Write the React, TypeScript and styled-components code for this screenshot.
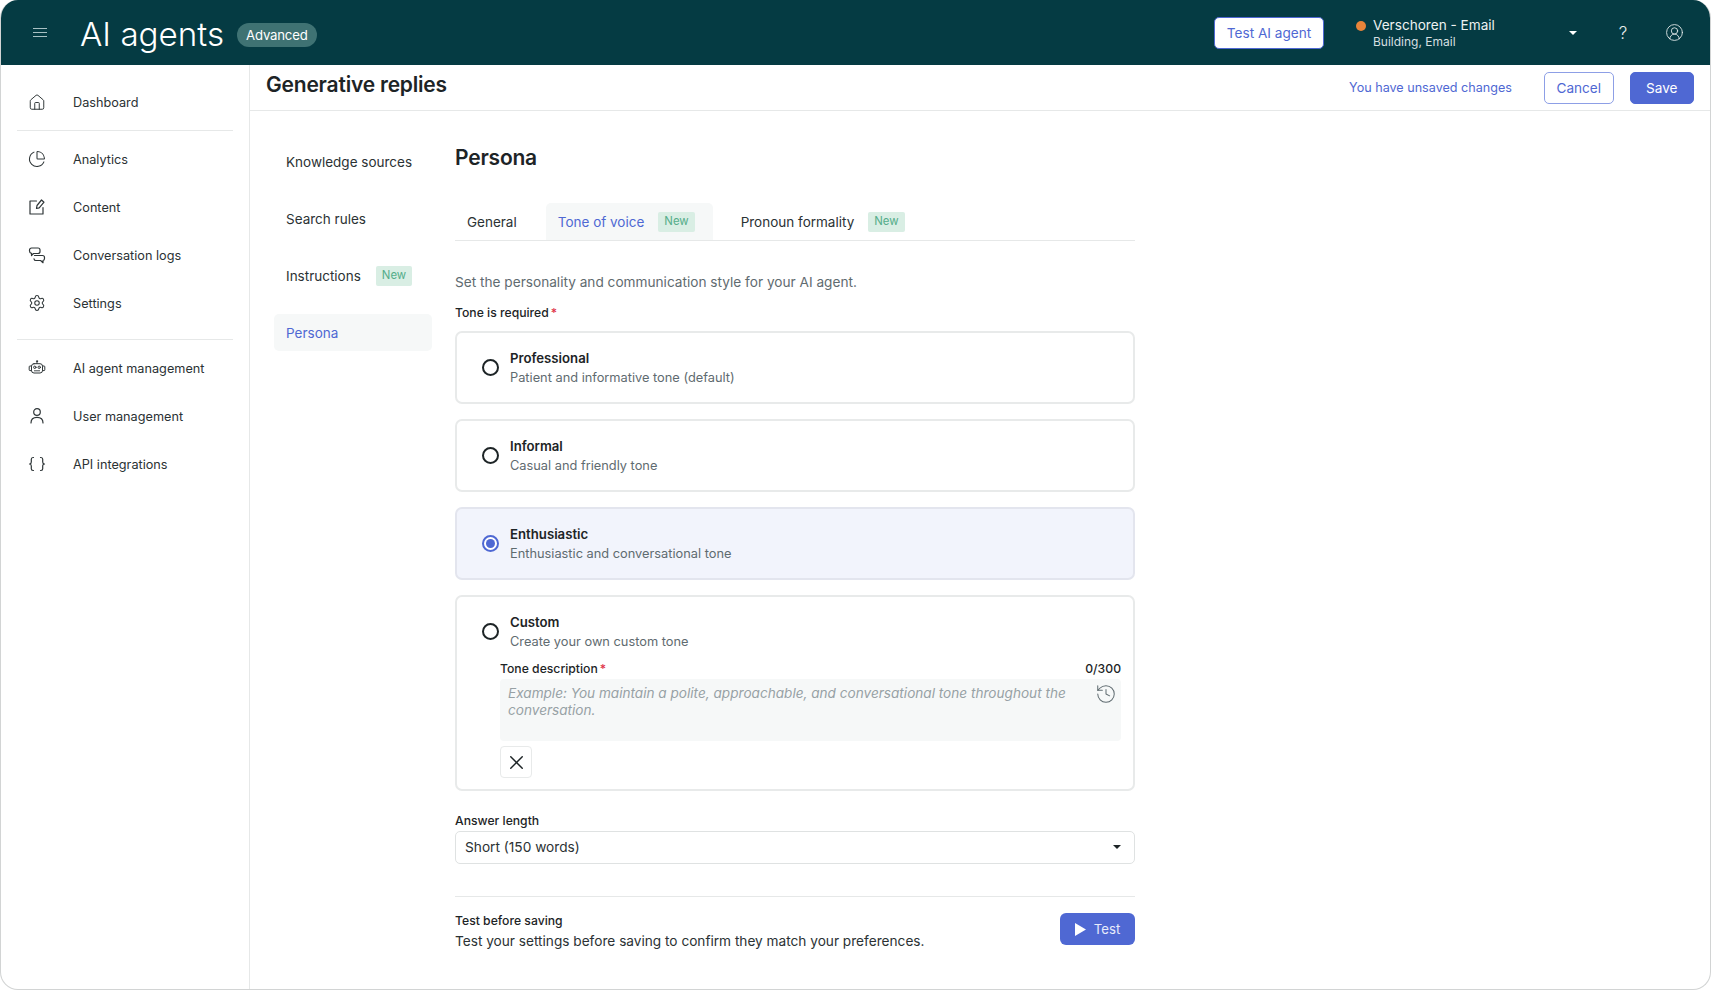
import React from "react";
import styled, { createGlobalStyle } from "styled-components";
import { House, ChartPie, Settings, History, X, CircleUserRound } from "lucide-react";

const Global = createGlobalStyle`
  html, body { margin: 0; padding: 0; background: #fff; }
  body { font-family: Inter, "Liberation Sans", sans-serif; color: #1d2426; }
  * { box-sizing: border-box; }
`;

const Frame = styled.div`
  width: 1711px;
  height: 990px;
  display: flex;
  flex-direction: column;
  border: 1px solid #d2d4d4;
  border-top: none;
  border-radius: 18px;
  overflow: hidden;
`;

// top bar
const Header = styled.header`
  height: 65px;
  flex: none;
  background: #053b43;
  display: flex;
  align-items: center;
  color: #fff;
  padding-left: 32px;
`;
const Burger = styled.div`
  width: 14px;
  display: flex;
  flex-direction: column;
  gap: 3px;
  margin-right: 33px;
  span { display: block; height: 1px; background: #a9c0c3; }
`;
const Title = styled.h1`
  margin: 0 13px 0 0;
  font-size: 33.2px;
  line-height: 42px;
  font-weight: 300;
  position: relative;
  top: 1px;
`;
const Badge = styled.span`
  height: 24px;
  padding: 0 9px;
  border-radius: 12px;
  background: #3f7273;
  font-size: 13.2px;
  line-height: 24px;
  letter-spacing: -0.2px;
  position: relative;
  top: 2px;
`;
const HeaderRight = styled.div`
  margin-left: auto;
  display: flex;
  align-items: center;
`;
const TestAgent = styled.button`
  width: 110px;
  height: 32px;
  background: #fff;
  border: 1px solid #4f68d3;
  border-radius: 5px;
  color: #4f68d3;
  font: 400 13.6px Inter, sans-serif;
  padding: 0;
  margin-right: 32px;
`;
const StatusDot = styled.span`
  width: 10px;
  height: 10px;
  border-radius: 50%;
  background: #e8843a;
  margin: -13px 7px 0 0;
`;
const Org = styled.div`
  width: 196px;
  display: flex;
  flex-direction: column;
  padding-top: 1px;
  strong { font-weight: 400; font-size: 13.6px; line-height: 17px; color: #eef2f2; }
  span { font-size: 12px; line-height: 16px; color: #d5dfe0; }
`;
const Caret = styled.span<{ $dark?: boolean }>`
  width: 0;
  height: 0;
  border-left: 4px solid transparent;
  border-right: 4px solid transparent;
  border-top: 4.5px solid ${(p) => (p.$dark ? "#1d2426" : "#fff")};
`;
const Help = styled.span`
  width: 20px;
  margin-left: 36px;
  text-align: center;
  font-size: 17px;
  font-weight: 300;
  color: #e8eeee;
`;
const Profile = styled.span`
  display: flex;
  margin: 0 26px 0 32px;
  color: #e8eeee;
`;

const Body = styled.div`
  flex: 1;
  display: flex;
  min-height: 0;
`;

// left sidebar
const Sidebar = styled.nav`
  width: 249px;
  flex: none;
  padding: 13px 16px 0;
  border-right: 1px solid #e6e8e8;
`;
const NavItem = styled.div`
  height: 48px;
  display: flex;
  align-items: center;
  padding-left: 11px;
  font-size: 12.7px;
  color: #2b3234;
`;
const NavIcon = styled.span`
  width: 18px;
  flex: none;
  display: flex;
  justify-content: center;
  margin-right: 27px;
  color: #2f3638;
`;
const NavRule = styled.div<{ $top: number }>`
  height: 1px;
  background: #e6e8e8;
  margin: ${(p) => p.$top}px 0 4px;
`;

const Main = styled.div`
  flex: 1;
  display: flex;
  flex-direction: column;
  min-width: 0;
`;
const SubHeader = styled.div`
  height: 46px;
  flex: none;
  display: flex;
  align-items: center;
  padding: 0 16px;
  border-bottom: 1px solid #e6e8e8;
`;
const PageTitle = styled.h2`
  margin: 0 auto 0 0;
  font-size: 21px;
  font-weight: 600;
  letter-spacing: -0.2px;
  position: relative;
  top: -3px;
  color: #1d2426;
`;
const Unsaved = styled.span`
  font-size: 12.6px;
  color: #4f68d3;
  margin: 0 32px 0 0;
`;
const Btn = styled.button<{ $solid?: boolean }>`
  height: 32px;
  border-radius: 5px;
  font: 400 13.6px Inter, sans-serif;
  padding: 0 ${(p) => (p.$solid ? "15.5px" : "11.5px")};
  color: ${(p) => (p.$solid ? "#fff" : "#4f68d3")};
  background: ${(p) => (p.$solid ? "#4f68d3" : "#fff")};
  border: 1px solid ${(p) => (p.$solid ? "#4f68d3" : "#8d9fe6")};
  & + & { margin-left: 16px; }
`;

const Content = styled.div`
  flex: 1;
  display: flex;
  min-height: 0;
`;

// settings sub nav
const SubNav = styled.div`
  width: 205px;
  flex: none;
  padding: 32px 23px 0 24px;
  display: flex;
  flex-direction: column;
  gap: 20px;
`;
const SubItem = styled.div<{ $active?: boolean }>`
  height: 37px;
  display: flex;
  align-items: center;
  gap: 15px;
  padding-left: 12px;
  border-radius: 5px;
  font-size: 13.5px;
  color: ${(p) => (p.$active ? "#4f68d3" : "#2b3234")};
  background: ${(p) => (p.$active ? "#f6f8f8" : "transparent")};
`;
const NewTag = styled.span`
  height: 20px;
  padding: 0 6px;
  border-radius: 2px;
  background: #d9eee4;
  color: #55ad8a;
  font-size: 11.4px;
  line-height: 19px;
`;

const Form = styled.main`
  width: 680px;
  flex: none;
  padding-top: 33px;
`;
const Heading = styled.h3`
  margin: 0 0 32px;
  height: 27px;
  line-height: 27px;
  font-size: 21px;
  font-weight: 600;
  letter-spacing: -0.2px;
`;
const Tabs = styled.div`
  height: 38px;
  display: flex;
  border-bottom: 1px solid #e6e8e8;
`;
const Tab = styled.div<{ $active?: boolean }>`
  height: 37px;
  display: flex;
  align-items: center;
  gap: 14px;
  padding: 0 ${(p) => (p.$active ? "18px" : "12px")} 0 12px;
  margin-right: ${(p) => (p.$active ? "16px" : "17px")};
  border-radius: 5px 5px 0 0;
  font-size: 13.5px;
  color: ${(p) => (p.$active ? "#4f68d3" : "#2b3234")};
  background: ${(p) => (p.$active ? "#f6f8f8" : "transparent")};
`;
const Lead = styled.p`
  margin: 32px 0 0;
  font-size: 13.65px;
  line-height: 18px;
  color: #5f6b70;
`;
const FieldLabel = styled.div<{ $mt: number }>`
  margin-top: ${(p) => p.$mt}px;
  font-size: 12.2px;
  line-height: 16px;
  font-weight: 500;
  color: #1d2426;
  i { color: #e0364c; font-style: normal; margin-left: 2px; }
`;
const Cards = styled.div`
  display: flex;
  flex-direction: column;
  gap: 15px;
  margin-top: 10px;
`;
const Card = styled.div<{ $on?: boolean }>`
  border: 2px solid ${(p) => (p.$on ? "#e3e5ee" : "#e8eaea")};
  background: ${(p) => (p.$on ? "#f2f4fc" : "#fff")};
  border-radius: 7px;
  padding: 0 12px 0 25px;
`;
const Choice = styled.div`
  height: 69px;
  display: flex;
  align-items: center;
  gap: 11px;
`;
const CustomChoice = styled(Choice)`
  height: 64px;
  padding-top: 5px;
`;
const Radio = styled.span<{ $on?: boolean }>`
  width: 17px;
  height: 17px;
  flex: none;
  border-radius: 50%;
  border: 2px solid ${(p) => (p.$on ? "#4f68d3" : "#1d2426")};
  background: #fff;
  display: flex;
  align-items: center;
  justify-content: center;
  &::after {
    content: "";
    width: 9px;
    height: 9px;
    border-radius: 50%;
    background: ${(p) => (p.$on ? "#4f68d3" : "transparent")};
  }
`;
const ChoiceText = styled.div`
  display: flex;
  flex-direction: column;
  strong { font-size: 13.2px; line-height: 19px; font-weight: 600; color: #1d2426; }
  span { font-size: 12.8px; line-height: 19px; color: #5f6b70; }
`;
const ToneRow = styled.div`
  display: flex;
  justify-content: space-between;
  margin: 0 0 2px 18px;
  font-size: 12.2px;
  line-height: 16px;
  font-weight: 500;
  i { color: #e0364c; font-style: normal; margin-left: 2px; }
`;
const ToneBox = styled.div`
  margin-left: 18px;
  height: 62px;
  padding: 6px 8px;
  border-radius: 4px;
  background: #f6f8f8;
  display: flex;
  justify-content: space-between;
  font-size: 13.6px;
  line-height: 17px;
  font-style: italic;
  color: #97a1a5;
  p { margin: 0; width: 560px; }
  svg { flex: none; color: #5f6b70; margin: -2px -4px 0 0; }
`;
const IconBtn = styled.button`
  width: 32px;
  height: 32px;
  margin: 5px 0 11px 18px;
  padding: 0;
  display: flex;
  align-items: center;
  justify-content: center;
  background: #fff;
  border: 1px solid #e8eaea;
  border-radius: 4px;
  color: #1d2426;
`;
const Select = styled.div`
  height: 33px;
  margin-top: 2px;
  padding: 0 13px 2px 9px;
  display: flex;
  align-items: center;
  justify-content: space-between;
  border: 1px solid #dfe2e2;
  border-radius: 5px;
  font-size: 13.7px;
  color: #2b3234;
`;
const Footer = styled.div`
  margin-top: 32px;
  padding-top: 14px;
  border-top: 1px solid #e6e8e8;
  display: flex;
  justify-content: space-between;
  align-items: flex-start;
`;
const FooterText = styled.div`
  display: flex;
  flex-direction: column;
  strong { font-size: 12.2px; line-height: 20px; font-weight: 500; }
  span { font-size: 13.65px; line-height: 21px; color: #2b3234; }
`;
const TestBtn = styled.button`
  width: 75px;
  height: 32px;
  margin-top: 2px;
  padding: 0;
  display: flex;
  align-items: center;
  justify-content: center;
  gap: 8px;
  border: none;
  border-radius: 6px;
  background: #4f68d3;
  color: #e7ebfb;
  font: 400 13.2px Inter, sans-serif;
`;

const iconProps = { width: 18, height: 18, viewBox: "0 0 18 18", fill: "none", stroke: "currentColor", strokeWidth: 1.2, strokeLinecap: "round" as const, strokeLinejoin: "round" as const };

const ContentIcon = () => (
  <svg {...iconProps}>
    <path d="M8.5 3H2v13h13V9.5" />
    <path d="M8.5 10.5l.5-3L13.5 2l2.5 2.2-4.8 5.6z" />
  </svg>
);
const ChatIcon = () => (
  <svg {...iconProps}>
    <path d="M3.5 2h6.5a2 2 0 012 2v1.5a2 2 0 01-2 2H5.5L3.5 9.5V7.4A2.4 2.4 0 011.5 5V4a2 2 0 012-2z" />
    <path d="M6.5 9.5h8a2 2 0 012 2v1a2 2 0 01-1.5 2v2.2l-2.4-2.2H8a2 2 0 01-2-1.7" />
  </svg>
);
const BotIcon = () => (
  <svg {...iconProps} strokeWidth={1}>
    <path d="M9 2.5v2" />
    <circle cx="9" cy="2.2" r=".6" />
    <rect x="3.5" y="4.7" width="11" height="9.3" rx="2.5" />
    <path d="M3.5 7H2a.8.8 0 00-.8.8v3a.8.8 0 00.8.8h1.5M14.5 7H16a.8.8 0 01.8.8v3a.8.8 0 01-.8.8h-1.5" />
    <circle cx="6.8" cy="8.3" r="1.2" />
    <circle cx="11.2" cy="8.3" r="1.2" />
    <path d="M6.5 11.8h5" strokeDasharray="1 1" />
  </svg>
);
const UserIcon = () => (
  <svg {...iconProps}>
    <circle cx="9" cy="5" r="3.3" />
    <path d="M3 16c0-3.6 2.6-5.6 6-5.6s6 2 6 5.6" />
  </svg>
);
const BracesIcon = () => (
  <svg {...iconProps}>
    <path d="M5.5 2.5H5A1.8 1.8 0 003.3 4.3v2.8c0 1-.7 1.9-1.8 1.9 1.1 0 1.8.9 1.8 1.9v2.8A1.8 1.8 0 005 15.5h.5" />
    <path d="M12.5 2.5h.5a1.8 1.8 0 011.7 1.8v2.8c0 1 .7 1.9 1.8 1.9-1.1 0-1.8.9-1.8 1.9v2.8a1.8 1.8 0 01-1.7 1.8h-.5" />
  </svg>
);
const PlayIcon = () => (
  <svg width="11" height="13" viewBox="0 0 11 13">
    <path d="M0 0l11 6.5L0 13z" fill="#fff" />
  </svg>
);

const SIDE_A = [
  { icon: <ChartPie size={20} strokeWidth={1.4} />, label: "Analytics" },
  { icon: <ContentIcon />, label: "Content" },
  { icon: <ChatIcon />, label: "Conversation logs" },
  { icon: <Settings size={20} strokeWidth={1.4} />, label: "Settings" },
];
const SIDE_B = [
  { icon: <BotIcon />, label: "AI agent management" },
  { icon: <UserIcon />, label: "User management" },
  { icon: <BracesIcon />, label: "API integrations" },
];
const TONES = [
  { title: "Professional", text: "Patient and informative tone (default)" },
  { title: "Informal", text: "Casual and friendly tone" },
  { title: "Enthusiastic", text: "Enthusiastic and conversational tone", on: true },
];

export default function App() {
  return (
    <Frame>
      <Global />
      <Header>
        <Burger><span /><span /><span /></Burger>
        <Title>AI agents</Title>
        <Badge>Advanced</Badge>
        <HeaderRight>
          <TestAgent>Test AI agent</TestAgent>
          <StatusDot />
          <Org>
            <strong>Verschoren - Email</strong>
            <span>Building, Email</span>
          </Org>
          <Caret />
          <Help>?</Help>
          <Profile><CircleUserRound size={19} strokeWidth={1.1} /></Profile>
        </HeaderRight>
      </Header>
      <Body>
        <Sidebar>
          <NavItem><NavIcon><House size={21} strokeWidth={1.3} /></NavIcon>Dashboard</NavItem>
          <NavRule $top={4} />
          {SIDE_A.map((i) => <NavItem key={i.label}><NavIcon>{i.icon}</NavIcon>{i.label}</NavItem>)}
          <NavRule $top={12} />
          {SIDE_B.map((i) => <NavItem key={i.label}><NavIcon>{i.icon}</NavIcon>{i.label}</NavItem>)}
        </Sidebar>
        <Main>
          <SubHeader>
            <PageTitle>Generative replies</PageTitle>
            <Unsaved>You have unsaved changes</Unsaved>
            <Btn>Cancel</Btn>
            <Btn $solid>Save</Btn>
          </SubHeader>
          <Content>
            <SubNav>
              <SubItem>Knowledge sources</SubItem>
              <SubItem>Search rules</SubItem>
              <SubItem>Instructions <NewTag>New</NewTag></SubItem>
              <SubItem $active>Persona</SubItem>
            </SubNav>
            <Form>
              <Heading>Persona</Heading>
              <Tabs>
                <Tab>General</Tab>
                <Tab $active>Tone of voice <NewTag>New</NewTag></Tab>
                <Tab>Pronoun formality <NewTag>New</NewTag></Tab>
              </Tabs>
              <Lead>Set the personality and communication style for your AI agent.</Lead>
              <FieldLabel $mt={14}>Tone is required<i>*</i></FieldLabel>
              <Cards>
                {TONES.map((t) => (
                  <Card key={t.title} $on={t.on}>
                    <Choice>
                      <Radio $on={t.on} />
                      <ChoiceText>
                        <strong>{t.title}</strong>
                        <span>{t.text}</span>
                      </ChoiceText>
                    </Choice>
                  </Card>
                ))}
                <Card>
                  <CustomChoice>
                    <Radio />
                    <ChoiceText>
                      <strong>Custom</strong>
                      <span>Create your own custom tone</span>
                    </ChoiceText>
                  </CustomChoice>
                  <ToneRow>
                    <span>Tone description<i>*</i></span>
                    <span>0/300</span>
                  </ToneRow>
                  <ToneBox>
                    <p>Example: You maintain a polite, approachable, and conversational tone throughout the conversation.</p>
                    <History size={22} strokeWidth={1.1} />
                  </ToneBox>
                  <IconBtn><X size={23} strokeWidth={1.5} /></IconBtn>
                </Card>
              </Cards>
              <FieldLabel $mt={22}>Answer length</FieldLabel>
              <Select>Short (150 words)<Caret $dark /></Select>
              <Footer>
                <FooterText>
                  <strong>Test before saving</strong>
                  <span>Test your settings before saving to confirm they match your preferences.</span>
                </FooterText>
                <TestBtn><PlayIcon />Test</TestBtn>
              </Footer>
            </Form>
          </Content>
        </Main>
      </Body>
    </Frame>
  );
}
